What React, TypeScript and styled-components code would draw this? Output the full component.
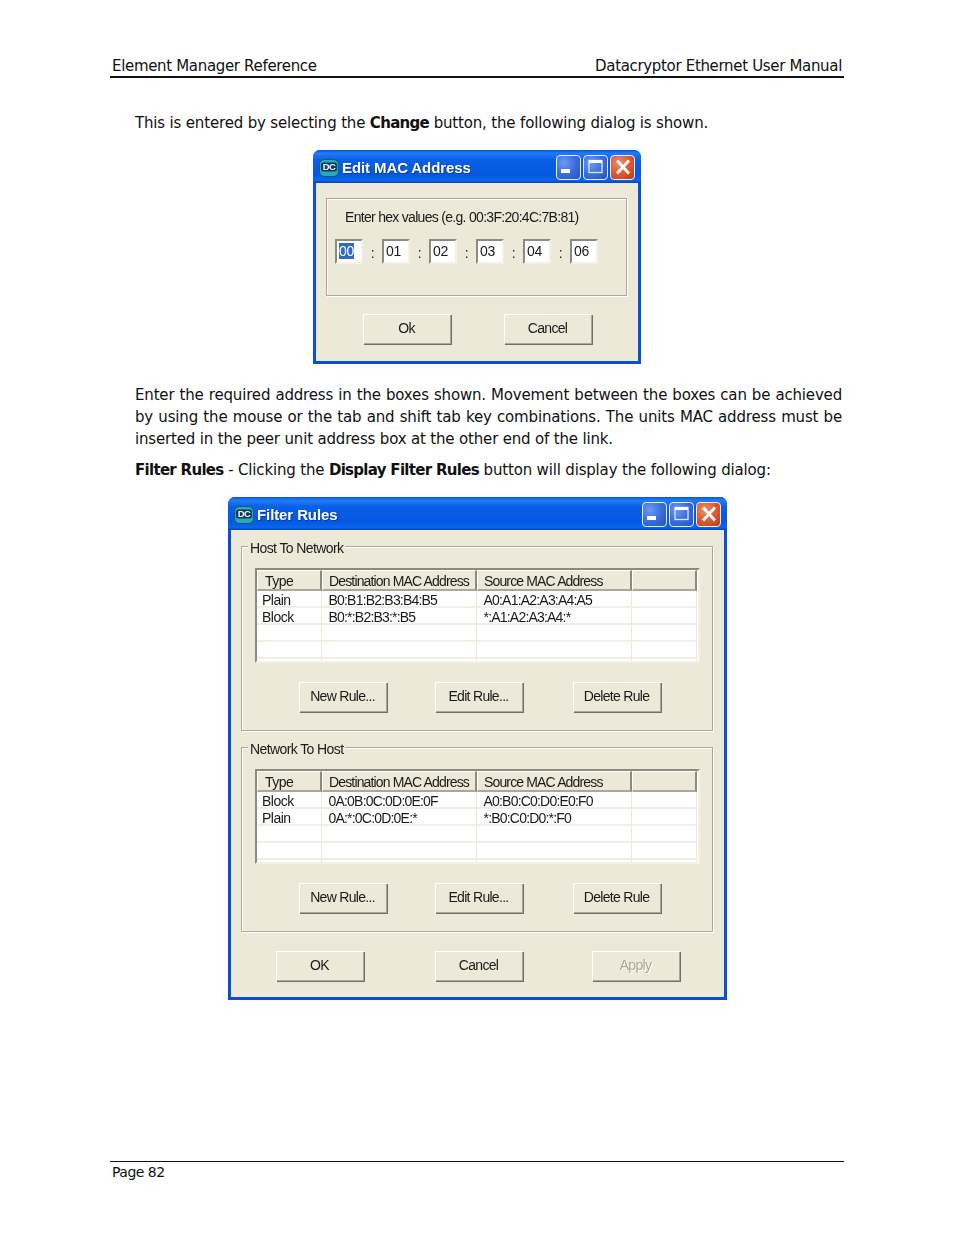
import { Fragment } from 'react'
import styled, { createGlobalStyle } from 'styled-components'

const Reset = createGlobalStyle`
  html, body {
    margin: 0;
    padding: 0;
    background: #fff;
  }
`

const Page = styled.div`
  width: 954px;
  height: 1235px;
  box-sizing: border-box;
  padding: 56px 110px 0;
  display: flex;
  flex-direction: column;
  font-family: "DejaVu Sans", sans-serif;
  color: #111;
  font-size: 15px;
`

const Header = styled.header`
  height: 20px;
  padding: 0 2px;
  display: flex;
  justify-content: space-between;
  align-items: center;
  border-bottom: 2px solid #111;
  letter-spacing: -0.33px;
`

const Main = styled.main`
  flex: 1;
  padding: 34px 2px 0 25px;
`

const Para = styled.p<{ $after?: number }>`
  margin: 0 0 ${p => p.$after ?? 9}px;
  line-height: 22px;
  text-align: justify;
  text-align-last: left;
  letter-spacing: -0.17px;
  b {
    font-weight: 700;
    letter-spacing: -0.7px;
  }
`

const Footer = styled.footer`
  height: 22px;
  padding: 0 2px;
  border-top: 1px solid #111;
  font-size: 14px;
  letter-spacing: -0.5px;
  line-height: 20px;
  margin-bottom: 51px;
`

const Win = styled.section<{ $w: number; $h: number; $x: number; $top: number; $bottom: number }>`
  box-sizing: border-box;
  width: ${p => p.$w}px;
  height: ${p => p.$h}px;
  margin: ${p => p.$top}px 0 ${p => p.$bottom}px ${p => p.$x}px;
  background: #0a4fd8;
  border-radius: 7px 7px 0 0;
  padding: 0 3px 3px;
  display: flex;
  flex-direction: column;
  font-family: "Liberation Sans", sans-serif;
  font-size: 14px;
  letter-spacing: -0.6px;
  color: #1a1a1a;
  filter: blur(0.3px);
`

const TitleBar = styled.div`
  height: 33px;
  margin: 0 -3px;
  padding: 2px 6px 0 6px;
  box-sizing: border-box;
  display: flex;
  align-items: center;
  gap: 3px;
  flex: none;
  border-radius: 7px 7px 0 0;
  background: linear-gradient(180deg, #0a56dc 0%, #1f7cf6 10%, #0b5fe6 30%, #0558e0 75%, #0a66ee 92%, #0543b8 100%);
`

const TitleText = styled.span`
  flex: 1;
  font-family: "Liberation Sans", sans-serif;
  font-weight: 700;
  font-size: 15px;
  letter-spacing: -0.1px;
  color: #fff;
  text-shadow: 1px 1px 0 #0a3a9c;
`

const WinBtn = styled.button<{ $close?: boolean }>`
  width: 25px;
  height: 25px;
  margin-left: -1px;
  padding: 0;
  box-sizing: border-box;
  border: 1px solid #e8eefc;
  border-radius: 4px;
  display: flex;
  align-items: center;
  justify-content: center;
  background: ${p =>
    p.$close
      ? 'radial-gradient(circle at 35% 30%, #ee8f6c 0%, #dc5a34 50%, #bf3a14 100%)'
      : 'radial-gradient(circle at 30% 30%, #6f9af0 0%, #3a6ee0 50%, #2350c8 100%)'};
`

const Body = styled.div`
  flex: 1;
  background: #ece9d8;
  display: flex;
  flex-direction: column;
`

const Etched = styled.div`
  box-sizing: border-box;
  border: 1px solid #aca899;
  box-shadow: 1px 1px 0 #fff, inset 1px 1px 0 #fff;
`

const MacGroup = styled(Etched)`
  height: 98px;
  margin: 15px 11px 18px 10px;
  padding: 9px 9px 0 8px;
`

const Hint = styled.div`
  padding-left: 10px;
  line-height: 18px;
  letter-spacing: -0.7px;
`

const MacRow = styled.div`
  display: flex;
  margin-top: 13px;
  height: 26px;
`

const Octet = styled.div`
  box-sizing: border-box;
  width: 28px;
  height: 25px;
  padding: 2px 0 0 2px;
  background: #fff;
  border: 2px solid #8e8a7c;
  border-right-color: #f4f2e8;
  border-bottom-color: #f4f2e8;
  line-height: 16px;
  letter-spacing: -0.3px;
`

const Selected = styled.span`
  background: #316ac5;
  color: #fff;
  display: inline-block;
`

const Colon = styled.span`
  width: 19px;
  text-align: center;
  line-height: 28px;
`

const BtnRow = styled.div<{ $left: number; $gap: number; $gap2?: number; $top?: number }>`
  display: flex;
  margin-top: ${p => p.$top ?? 0}px;
  padding-left: ${p => p.$left}px;
  gap: ${p => p.$gap}px;
  & > :nth-child(3) {
    margin-left: ${p => (p.$gap2 ?? p.$gap) - p.$gap}px;
  }
`

const Btn = styled.button<{ $off?: boolean }>`
  box-sizing: border-box;
  width: 88px;
  height: 30px;
  padding: 0 2px 3px 0;
  background: #ece9d8;
  border: none;
  border-top: 1px solid #fff;
  border-left: 1px solid #fff;
  box-shadow: 1px 1px 0 #716f64, inset -1px -1px 0 #aca899;
  font: inherit;
  letter-spacing: -0.7px;
  color: ${p => (p.$off ? '#aca899' : '#1a1a1a')};
  text-shadow: ${p => (p.$off ? '1px 1px 0 #fff' : 'none')};
`

const RuleGroup = styled(Etched)<{ $top: number }>`
  position: relative;
  height: 185px;
  margin: ${p => p.$top}px 11px 0 10px;
  padding: 21px 12px 0 13px;
  flex: none;
`

const Legend = styled.span`
  position: absolute;
  left: 6px;
  top: -7px;
  padding: 0 2px;
  line-height: 16px;
  background: #ece9d8;
`

const ListFrame = styled.div`
  box-sizing: border-box;
  height: 95px;
  width: 445px;
  overflow: hidden;
  background: #fff;
  border: 2px solid #8e8a7c;
  border-right-color: #f4f2e8;
  border-bottom-color: #f4f2e8;
  margin-bottom: 19px;
`

const Grid = styled.div`
  display: grid;
  grid-template-columns: 65px 155px 155px 65px;
`

const HeadCell = styled.div`
  box-sizing: border-box;
  height: 21px;
  padding-left: 6px;
  background: #ece9d8;
  border-top: 1px solid #fff;
  border-left: 1px solid #fff;
  border-right: 2px solid #8e8a7c;
  border-bottom: 2px solid #aca899;
  line-height: 20px;
  letter-spacing: -0.85px;
  white-space: nowrap;
  overflow: hidden;
  &:first-child {
    padding-left: 7px;
    letter-spacing: -0.5px;
  }
`

const Cell = styled.div`
  box-sizing: border-box;
  height: 17px;
  padding-left: 6.5px;
  line-height: 19px;
  letter-spacing: -0.8px;
  border-right: 1px solid #ece9d8;
  border-bottom: 2px solid #f1efe4;
  white-space: nowrap;
  &:nth-child(4n + 1) {
    padding-left: 5px;
    letter-spacing: -0.5px;
  }
`

const Icon = () => (
  <svg width="20" height="20" viewBox="0 0 20 20">
    <rect x="0.5" y="1.5" width="19" height="17" rx="5" fill="#2aa9b8" stroke="#0f5a70" />
    <rect x="2" y="4.5" width="16" height="9" rx="2.5" fill="#123a5c" />
    <text x="10" y="12.3" textAnchor="middle" fontFamily="Liberation Sans" fontWeight="700" fontSize="9.5" fill="#f2f8ff">DC</text>
  </svg>
)

const Controls = () => (
  <>
    <WinBtn aria-label="Minimize">
      <svg width="23" height="23" viewBox="0 0 23 23"><rect x="4" y="13" width="9" height="4" fill="#fff" /></svg>
    </WinBtn>
    <WinBtn aria-label="Maximize">
      <svg width="23" height="23" viewBox="0 0 23 23"><rect x="5" y="4.5" width="13" height="12" fill="none" stroke="#dfe8ff" strokeWidth="1.3" /><rect x="5" y="4" width="13" height="3" fill="#fff" /></svg>
    </WinBtn>
    <WinBtn $close aria-label="Close">
      <svg width="23" height="23" viewBox="0 0 23 23"><path d="M7 5.5l10 11M17 5.5L7 16.5" stroke="#fff" strokeWidth="2.8" strokeLinecap="square" /></svg>
    </WinBtn>
  </>
)

const COLS = ['Type', 'Destination MAC Address', 'Source MAC Address', '']

const Row = ({ cells }: { cells: string[] }) => (
  <>
    {cells.map((c, i) => <Cell key={i}>{c}</Cell>)}
    <Cell />
  </>
)

const RuleTable = ({ rows }: { rows: string[][] }) => (
  <ListFrame>
    <Grid>
      {COLS.map((c, i) => <HeadCell key={i}>{c}</HeadCell>)}
      {[...rows, ['', '', ''], ['', '', ''], ['', '', '']].map((r, i) => (
        <Row key={i} cells={r} />
      ))}
    </Grid>
  </ListFrame>
)

const RuleSection = ({ title, rows, top }: { title: string; rows: string[][]; top: number }) => (
  <RuleGroup $top={top}>
    <Legend>{title}</Legend>
    <RuleTable rows={rows} />
    <BtnRow $left={44} $gap={48} $gap2={50}>
      <Btn>New Rule...</Btn>
      <Btn>Edit Rule...</Btn>
      <Btn>Delete Rule</Btn>
    </BtnRow>
  </RuleGroup>
)

export default function App() {
  const rest = ['01', '02', '03', '04', '06']
  return (
    <Page>
      <Reset />
      <Header>
        <span>Element Manager Reference</span>
        <span>Datacryptor Ethernet User Manual</span>
      </Header>
      <Main>
        <Para $after={0}>This is entered by selecting the <b>Change</b> button, the following dialog is shown.</Para>
        <Win $w={328} $h={214} $x={178} $top={16} $bottom={20}>
          <TitleBar>
            <Icon />
            <TitleText>Edit MAC Address</TitleText>
            <Controls />
          </TitleBar>
          <Body>
            <MacGroup>
              <Hint>Enter hex values (e.g. 00:3F:20:4C:7B:81)</Hint>
              <MacRow>
                <Octet><Selected>00</Selected></Octet>
                {rest.map(v => (
                  <Fragment key={v}>
                    <Colon>:</Colon>
                    <Octet>{v}</Octet>
                  </Fragment>
                ))}
              </MacRow>
            </MacGroup>
            <BtnRow $left={47} $gap={53}>
              <Btn>Ok</Btn>
              <Btn>Cancel</Btn>
            </BtnRow>
          </Body>
        </Win>
        <Para>Enter the required address in the boxes shown. Movement between the boxes can be achieved by using the mouse or the tab and shift tab key combinations. The units MAC address must be inserted in the peer unit address box at the other end of the link.</Para>
        <Para $after={0}><b>Filter Rules</b> - Clicking the <b>Display Filter Rules</b> button will display the following dialog:</Para>
        <Win $w={499} $h={503} $x={93} $top={16} $bottom={0}>
          <TitleBar>
            <Icon />
            <TitleText>Filter Rules</TitleText>
            <Controls />
          </TitleBar>
          <Body>
            <RuleSection
              top={16}
              title="Host To Network"
              rows={[['Plain', 'B0:B1:B2:B3:B4:B5', 'A0:A1:A2:A3:A4:A5'], ['Block', 'B0:*:B2:B3:*:B5', '*:A1:A2:A3:A4:*']]}
            />
            <RuleSection
              top={16}
              title="Network To Host"
              rows={[['Block', '0A:0B:0C:0D:0E:0F', 'A0:B0:C0:D0:E0:F0'], ['Plain', '0A:*:0C:0D:0E:*', '*:B0:C0:D0:*:F0']]}
            />
            <BtnRow $left={45} $gap={71} $gap2={69} $top={19}>
              <Btn>OK</Btn>
              <Btn>Cancel</Btn>
              <Btn $off>Apply</Btn>
            </BtnRow>
          </Body>
        </Win>
      </Main>
      <Footer>Page 82</Footer>
    </Page>
  )
}
